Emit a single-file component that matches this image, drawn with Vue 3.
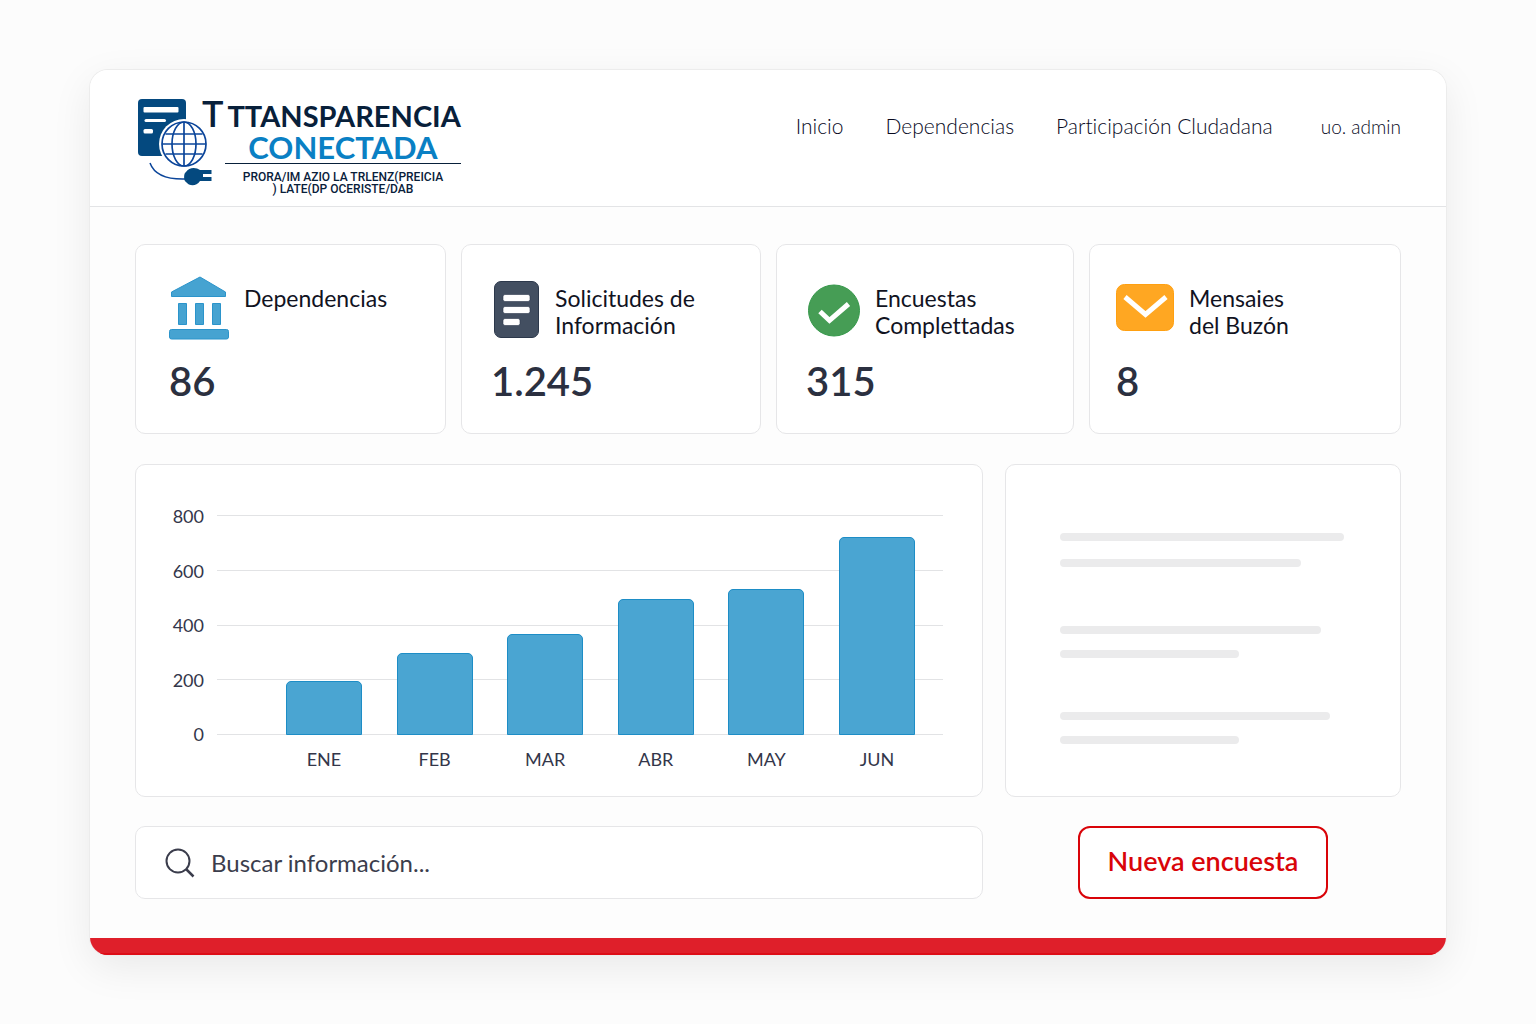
<script setup>
const links = ['Inicio', 'Dependencias', 'Participación Cludadana']

const stats = [
  { id: 'offices', lines: ['Dependencias'], value: '86' },
  { id: 'requests', lines: ['Solicitudes de', 'Información'], value: '1.245' },
  { id: 'surveys', lines: ['Encuestas', 'Complettadas'], value: '315' },
  { id: 'messages', lines: ['Mensaies', 'del Buzón'], value: '8' }
]

const ticks = [800, 600, 400, 200, 0]
const maxValue = 800
const months = [
  { name: 'ENE', value: 197 },
  { name: 'FEB', value: 300 },
  { name: 'MAR', value: 366 },
  { name: 'ABR', value: 495 },
  { name: 'MAY', value: 532 },
  { name: 'JUN', value: 719 }
]

const notes = [
  [100, 85],
  [92, 63],
  [95, 63]
]
</script>

<template>
  <div class="page">
    <div class="window">
      <header class="header">
        <a href="#" class="brand">
          <svg class="brand-icon" width="76" height="90" viewBox="0 0 76 90" aria-hidden="true">
            <rect x="1" y="1" width="48" height="57" rx="4" fill="#04497f" />
            <rect x="6.500" y="9" width="35" height="5.500" rx="1" fill="#fff" />
            <rect x="7.500" y="21" width="21.500" height="3" rx="1.500" fill="#fff" />
            <rect x="6.500" y="31" width="9.500" height="4.500" rx="1.500" fill="#fff" />
            <circle cx="47" cy="46" r="25" fill="#fff" />
            <g fill="none" stroke="#0b459a" stroke-width="1.7">
              <circle cx="47" cy="46" r="22" />
              <ellipse cx="47" cy="46" rx="12" ry="22" />
              <path d="M47 24v44M25 46h44M28.500 36h37M28.500 56h37" />
              <path d="M13 65c4 11 15 17 37 16" stroke-width="1.500" />
            </g>
            <path d="M49 74c3-5 10-5 14-2h11.500v4H66v3h8.500v4H63c-4 6-11 5-14 1-2.500-1-2.500-9 0-10z" fill="#04497f" />
          </svg>
          <span class="wordmark">
            <span class="name"><span class="initial">T</span><span>TTANSPARENCIA</span></span>
            <span class="second">CONECTADA</span>
            <span class="tagline">PRORA/IM AZIO LA TRLENZ(PREICIA<br>) LATE(DP OCERISTE/DAB</span>
          </span>
        </a>
        <nav class="nav">
          <a v-for="link in links" :key="link" href="#">{{ link }}</a>
          <a href="#" class="user">uo. admin</a>
        </nav>
      </header>

      <main class="main">
        <section class="stats">
          <article v-for="stat in stats" :key="stat.id" class="card stat" :class="stat.id">
            <div class="stat-top">
              <svg v-if="stat.id === 'offices'" width="60" height="64" viewBox="0 0 60 64" aria-hidden="true">
                <g fill="#46a3d1" stroke="#2b94cb" stroke-linejoin="round">
                  <path d="M31 1 56.500 16v4.500H2.500V16z" />
                  <path d="M9.500 27.500h8v21h-8zM26.500 27.500h8v21h-8zM43.500 27.500h8v21h-8z" />
                  <rect x=".5" y="53.500" width="59" height="9.500" rx="2" />
                </g>
              </svg>
              <svg v-else-if="stat.id === 'requests'" width="49" height="64" viewBox="0 0 49 64" aria-hidden="true">
                <rect x="3.500" y="5.500" width="44" height="56" rx="6.500" fill="#434f61" stroke="#2c384b" />
                <g fill="#fff" stroke="#2c384b" stroke-width=".6">
                  <rect x="12" y="18.500" width="27" height="7" rx="2" />
                  <rect x="12" y="30.500" width="27" height="7" rx="2" />
                  <rect x="12" y="42.500" width="17" height="7" rx="2" />
                </g>
              </svg>
              <svg v-else-if="stat.id === 'surveys'" width="54" height="64" viewBox="0 0 54 64" aria-hidden="true">
                <circle cx="28" cy="34.500" r="25.500" fill="#469d55" stroke="#35984a" />
                <path d="m14 35.500 9.500 9L42.500 28" fill="none" stroke="#fff" stroke-width="5" />
              </svg>
              <svg v-else width="58" height="64" viewBox="0 0 58 64" aria-hidden="true">
                <rect x=".5" y="8.500" width="57" height="46" rx="8" fill="#ffa722" stroke="#ffa011" />
                <path d="M9 21 29.500 38.500 50 21" fill="none" stroke="#fff" stroke-width="5" />
              </svg>
              <h2><span v-for="line in stat.lines" :key="line">{{ line }}</span></h2>
            </div>
            <p class="value">{{ stat.value }}</p>
          </article>
        </section>

        <section class="panels">
          <figure class="card chart">
            <div class="ticks">
              <span v-for="tick in ticks" :key="tick">{{ tick }}</span>
            </div>
            <div class="plot">
              <div class="gridlines"><i v-for="tick in ticks" :key="tick"></i></div>
              <div class="bars">
                <div
                  v-for="month in months"
                  :key="month.name"
                  class="bar"
                  :style="{ height: (month.value / maxValue) * 100 + '%' }"
                ></div>
              </div>
            </div>
            <div class="months">
              <span v-for="month in months" :key="month.name">{{ month.name }}</span>
            </div>
          </figure>
          <aside class="card notes">
            <div v-for="(note, i) in notes" :key="i" class="note">
              <i v-for="(width, j) in note" :key="j" :style="{ width: width + '%' }"></i>
            </div>
          </aside>
        </section>

        <section class="actions">
          <label class="card search">
            <svg width="30" height="30" viewBox="0 0 30 30" aria-hidden="true">
              <g fill="none" stroke="#3b3d4c" stroke-width="2">
                <circle cx="13" cy="13" r="11.500" />
                <path d="m21 21 7.500 7.500" stroke-width="2.500" />
              </g>
            </svg>
            <input type="search" placeholder="Buscar información..." aria-label="Buscar información">
          </label>
          <div class="action">
            <button type="button">Nueva encuesta</button>
          </div>
        </section>
      </main>
      <footer class="stripe"></footer>
    </div>
  </div>
</template>

<style>
body {
  margin: 0;
  background: #fcfcfc;
}
</style>

<style scoped>
* {
  box-sizing: border-box;
}

.page {
  min-height: 100vh;
  padding: 70px 90px;
  font-family: Lato, "Noto Sans", sans-serif;
  font-variant-ligatures: none;
  color: #11131f;
}

.window {
  border-radius: 18px;
  overflow: hidden;
  background: #fdfdfd;
  box-shadow: 0 0 0 1px #ececec, 0 12px 40px rgba(0, 0, 0, 0.08);
}

.header {
  display: flex;
  justify-content: space-between;
  align-items: flex-start;
  height: 137px;
  padding: 28px 45px 0 47px;
  border-bottom: 1px solid #e3e4e6;
  background: #fff;
}

a {
  color: inherit;
  text-decoration: none;
}

.brand {
  display: flex;
  color: #08203a;
}

.brand-icon {
  flex: none;
}

.wordmark {
  display: flex;
  flex-direction: column;
  margin-left: -11px;
}

.name {
  display: flex;
  align-items: baseline;
  gap: 4px;
  font-size: 29px;
  font-weight: 700;
  line-height: 30px;
}

.initial {
  font-size: 36px;
  font-weight: 600;
}

.second,
.tagline {
  margin-left: 23px;
  text-align: center;
}

.second {
  border-bottom: 1px solid #08203a;
  font-size: 31px;
  font-weight: 700;
  line-height: 32px;
  color: #0a80c4;
}

.tagline {
  padding-top: 7px;
  font-family: Roboto, sans-serif;
  font-size: 12px;
  font-weight: 500;
  line-height: 12px;
}

.nav {
  display: flex;
  align-items: baseline;
  gap: 42px;
  padding-top: 13px;
  font-size: 21px;
  font-weight: 300;
  line-height: 30px;
  color: #080a1e;
}

.user {
  margin-left: 6px;
  font-size: 19px;
}

.main {
  display: flex;
  flex-direction: column;
  padding: 37px 45px 39px;
}

.card {
  border: 1px solid #e6e6e8;
  border-radius: 10px;
  background: #fff;
}

.stats {
  display: grid;
  grid-template-columns: 311fr 300fr 298fr 312fr;
  gap: 15px;
}

.stat {
  padding: 31px 24px 27px 29px;
}

.stat.offices {
  padding-left: 33px;
}

.stat.messages {
  padding-left: 26px;
}

.stat-top {
  display: flex;
  gap: 15px;
}

.stat-top svg {
  flex: none;
}

h2 {
  display: flex;
  flex-direction: column;
  margin: 0;
  padding-top: 9px;
  font-size: 23px;
  font-weight: 400;
  line-height: 27px;
}

.value {
  margin: 17px 0 0;
  font-size: 40px;
  font-weight: 600;
  line-height: 49px;
  color: #2b3040;
}

.panels,
.actions {
  display: grid;
  grid-template-columns: 848fr 396fr;
  column-gap: 22px;
}

.panels {
  margin: 30px 0 29px;
}

.chart {
  display: grid;
  grid-template-columns: 33px 1fr;
  grid-template-rows: 220px auto;
  column-gap: 13px;
  row-gap: 14px;
  margin: 0;
  padding: 50px 39px 27px 35px;
  font-size: 18px;
  line-height: 20px;
  color: #33364a;
}

.ticks {
  display: flex;
  flex-direction: column;
  justify-content: space-between;
  margin: -9px 0;
  text-align: right;
}

.plot {
  display: grid;
}

.gridlines,
.bars {
  grid-area: 1 / 1;
}

.gridlines {
  display: flex;
  flex-direction: column;
  justify-content: space-between;
}

.gridlines i {
  height: 1px;
  background: #e2e3e5;
}

.bars,
.months {
  display: flex;
  justify-content: space-between;
  align-items: flex-end;
  padding: 0 28px 0 69px;
}

.bar {
  width: 76px;
  border: 1px solid #1d8dc6;
  border-radius: 5px 5px 0 0;
  background: #4aa5d2;
}

.months {
  grid-column: 2;
}

.months span {
  width: 76px;
  text-align: center;
}

.notes {
  padding: 68px 56px 52px 54px;
}

.note {
  display: grid;
  gap: 16px;
  margin-bottom: 54px;
}

.note:first-child {
  gap: 18px;
  margin-bottom: 59px;
}

.note:last-child {
  margin-bottom: 0;
}

.note i {
  height: 8px;
  border-radius: 4px;
  background: #ebebec;
}

.search {
  display: flex;
  align-items: center;
  gap: 16px;
  height: 73px;
  padding: 0 29px;
}

.search input {
  flex: 1;
  min-width: 0;
  padding: 0;
  border: 0;
  outline: 0;
  background: none;
  font: inherit;
  font-size: 24px;
  line-height: 32px;
  color: #3b3d4c;
}

.search input::placeholder {
  color: #3b3d4c;
  opacity: 1;
}

.action {
  display: flex;
  justify-content: center;
}

button {
  padding: 0 28px 4px;
  border: 2px solid #d90409;
  border-radius: 12px;
  background: #fff;
  font: inherit;
  font-size: 27px;
  font-weight: 600;
  color: #d90409;
}

.stripe {
  height: 17px;
  border-bottom: 2px solid #dd0d17;
  background: #df1f2a;
}
</style>
